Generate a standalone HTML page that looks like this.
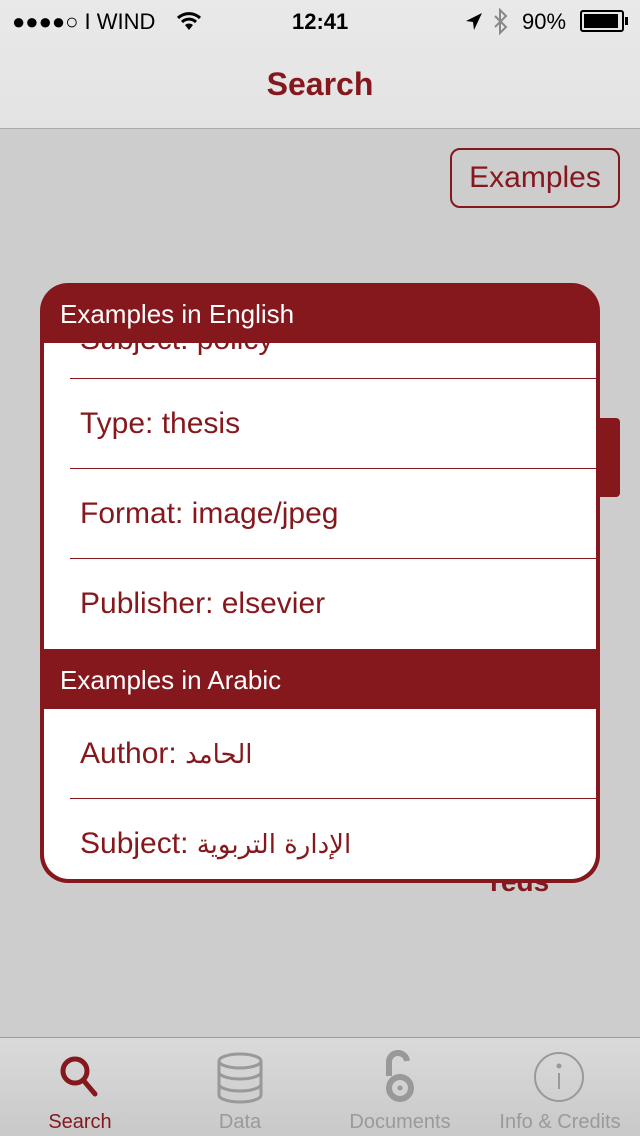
<!DOCTYPE html>
<html><head><meta charset="utf-8"><style>
*{margin:0;padding:0;box-sizing:border-box}
body{width:640px;height:1136px;background:#cdcdcd;font-family:"Liberation Sans","Noto Sans CJK SC",sans-serif;position:relative;overflow:hidden;color:#85181d}
.abs{position:absolute}
#nav{left:0;top:0;width:640px;height:129px;background:linear-gradient(#e9e9e9,#e3e3e3);border-bottom:1px solid #a9a9a9}
.sb{font-size:22px;color:#000;top:9px}
#title{top:66px;width:640px;text-align:center;font-size:32px;font-weight:bold;color:#85181d}
#ex{left:450px;top:148px;width:170px;height:60px;border:2px solid #85181d;border-radius:10px;font-size:30px;text-align:center;line-height:56px;color:#85181d}
#tab{left:594px;top:418px;width:26px;height:79px;background:#85181d;border-radius:0 4px 4px 0}
#reds{left:490px;top:866px;font-size:28px;font-weight:bold;color:#85181d}
#pop{left:40px;top:283px;width:560px;height:600px;background:#85181d;border-radius:28px;overflow:hidden}
.white{position:absolute;left:4px;width:552px;background:#fff}
.hd{position:absolute;left:20px;color:#fff;font-size:26px}
.row{position:absolute;left:36px;font-size:30px;color:#85181d}
.sep{position:absolute;left:26px;right:0;height:1px;background:#85181d}
#tb{left:0;top:1037px;width:640px;height:99px;background:linear-gradient(#dadada,#c9c9c9);border-top:1px solid #9e9e9e}
.tl{position:absolute;top:1111px;font-size:20px;color:#9a9a9a;text-align:center}
</style></head><body>
<div id="nav" class="abs"></div>
<div class="abs sb" style="left:12px">●●●●○ I WIND</div>
<svg class="abs" style="left:176px;top:10px" width="26" height="22" viewBox="0 0 26 22"><path d="M2 8 A16 16 0 0 1 24 8" stroke="#000" stroke-width="3" fill="none"/><path d="M6 12 A10 10 0 0 1 20 12" stroke="#000" stroke-width="3" fill="none"/><path d="M13 20 L9 15 A6 6 0 0 1 17 15Z" fill="#000"/></svg>
<div class="abs sb" style="left:292px;font-weight:bold">12:41</div>
<svg class="abs" style="left:464px;top:12px" width="20" height="20" viewBox="0 0 20 20"><path d="M18 1 L2 9 L9 10 L10 18Z" fill="#000"/></svg>
<svg class="abs" style="left:492px;top:8px" width="18" height="28" viewBox="0 0 18 28" fill="none" stroke="#888" stroke-width="2"><path d="M3 8 L14 19 L8 25 V2 L14 8 L3 19"/></svg>
<div class="abs sb" style="left:522px">90%</div>
<div class="abs" style="left:580px;top:10px;width:44px;height:22px;border:2px solid #000;border-radius:3px;padding:2px"><div style="width:34px;height:14px;background:#000"></div></div>
<div class="abs" style="left:625px;top:17px;width:3px;height:8px;background:#000"></div>
<div id="title" class="abs">Search</div>
<div id="ex" class="abs">Examples</div>
<div id="tab" class="abs"></div>
<div id="reds" class="abs">reds</div>
<div id="pop" class="abs">
 <div class="hd" style="top:16px">Examples in English</div>
 <div class="white" style="top:60px;height:306px">
  <div class="row" style="top:-20px">Subject: policy</div>
  <div class="sep" style="top:35px"></div>
  <div class="row" style="top:64px">Type: thesis</div>
  <div class="sep" style="top:125px"></div>
  <div class="row" style="top:154px">Format: image/jpeg</div>
  <div class="sep" style="top:215px"></div>
  <div class="row" style="top:244px">Publisher: elsevier</div>
 </div>
 <div class="hd" style="top:382px">Examples in Arabic</div>
 <div class="white" style="top:426px;height:170px;border-radius:0 0 25px 25px">
  <div class="row" style="top:28px">Author: <span style="font-family:'DejaVu Sans',sans-serif;font-size:26px">الحامد</span></div>
  <div class="sep" style="top:89px"></div>
  <div class="row" style="top:118px">Subject: <span style="font-family:'DejaVu Sans',sans-serif;font-size:26px">الإدارة التربوية</span></div>
 </div>
</div>
<div id="tb" class="abs"></div>
<svg class="abs" style="left:58px;top:1054px" width="44" height="46" viewBox="0 0 44 46"><circle cx="17" cy="17" r="12" stroke="#85181d" stroke-width="5" fill="none"/><path d="M26 27 L37 40" stroke="#85181d" stroke-width="5" stroke-linecap="round"/></svg>
<svg class="abs" style="left:216px;top:1052px" width="48" height="52" viewBox="0 0 48 52" fill="none" stroke="#999" stroke-width="3"><ellipse cx="24" cy="9" rx="21" ry="7"/><path d="M3 9 V43 A21 7 0 0 0 45 43 V9"/><path d="M3 20 A21 7 0 0 0 45 20 M3 32 A21 7 0 0 0 45 32"/></svg>
<svg class="abs" style="left:380px;top:1050px" width="40" height="54" viewBox="0 0 40 54" fill="none" stroke="#999" stroke-width="6"><path d="M9 26 V13 A9 9 0 0 1 27 11"/><circle cx="20" cy="38" r="11"/><circle cx="20" cy="38" r="2.5" fill="#999" stroke="none"/></svg>
<svg class="abs" style="left:533px;top:1051px" width="52" height="52" viewBox="0 0 52 52" fill="none" stroke="#999" stroke-width="2"><circle cx="26" cy="26" r="24"/><path d="M26 22 V38"/><circle cx="26" cy="15" r="1.5" fill="#999"/></svg>
<div class="tl" style="left:30px;width:100px;color:#85181d">Search</div>
<div class="tl" style="left:190px;width:100px">Data</div>
<div class="tl" style="left:330px;width:140px">Documents</div>
<div class="tl" style="left:480px;width:160px">Info &amp; Credits</div>
</body></html>
